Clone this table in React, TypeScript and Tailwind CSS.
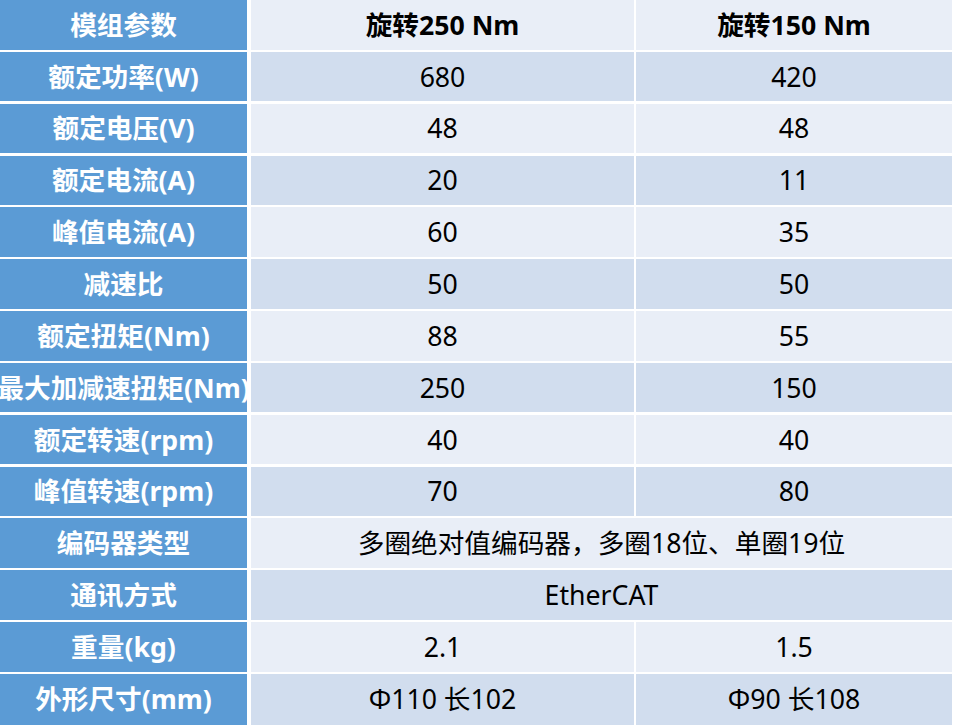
import React from "react";

type Row = { label: string; a: string; b?: string; merged?: boolean };

const rows: Row[] = [
  { label: "额定功率(W)", a: "680", b: "420" },
  { label: "额定电压(V)", a: "48", b: "48" },
  { label: "额定电流(A)", a: "20", b: "11" },
  { label: "峰值电流(A)", a: "60", b: "35" },
  { label: "减速比", a: "50", b: "50" },
  { label: "额定扭矩(Nm)", a: "88", b: "55" },
  { label: "最大加减速扭矩(Nm)", a: "250", b: "150" },
  { label: "额定转速(rpm)", a: "40", b: "40" },
  { label: "峰值转速(rpm)", a: "70", b: "80" },
  { label: "编码器类型", a: "多圈绝对值编码器，多圈18位、单圈19位", merged: true },
  { label: "通讯方式", a: "EtherCAT", merged: true },
  { label: "重量(kg)", a: "2.1", b: "1.5" },
  { label: "外形尺寸(mm)", a: "Φ110 长102", b: "Φ90 长108" },
];

const font = { fontFamily: '"Noto Sans", "Noto Sans CJK SC", sans-serif' };

export default function App() {
  return (
    <div className="w-[955px] h-[725px] bg-white overflow-hidden" style={font}>
      <div className="flex flex-col gap-[2.35px] w-[952px] h-[725px]">
        <div className="flex h-[49.5px] shrink-0">
          <div className="w-[247px] shrink-0 bg-[#5b9bd5] flex items-center justify-center text-white font-bold text-[26.67px] whitespace-nowrap overflow-hidden">
            模组参数
          </div>
          <div className="w-[383px] ml-[4px] shrink-0 bg-[#e9eef7] flex items-center justify-center text-black font-bold text-[26.67px] whitespace-nowrap">
            旋转250 Nm
          </div>
          <div className="w-[316px] ml-[2px] shrink-0 bg-[#e9eef7] flex items-center justify-center text-black font-bold text-[26.67px] whitespace-nowrap">
            旋转150 Nm
          </div>
        </div>
        {rows.map((r, i) => {
          const bg = i % 2 === 0 ? "bg-[#d1ddee]" : "bg-[#e9eef7]";
          const last = i === rows.length - 1;
          return (
            <div key={i} className={last ? "flex flex-1 min-h-0" : "flex h-[49.5px] shrink-0"}>
              <div className="w-[247px] shrink-0 bg-[#5b9bd5] flex items-center justify-center text-white font-bold text-[26.67px] whitespace-nowrap overflow-hidden">
                {r.label}
              </div>
              {r.merged ? (
                <div className={`w-[701px] ml-[4px] shrink-0 ${bg} flex items-center justify-center text-black text-[26.67px] whitespace-nowrap`}>
                  {r.a}
                </div>
              ) : (
                <>
                  <div className={`w-[383px] ml-[4px] shrink-0 ${bg} flex items-center justify-center text-black text-[26.67px] whitespace-nowrap`}>
                    {r.a}
                  </div>
                  <div className={`w-[316px] ml-[2px] shrink-0 ${bg} flex items-center justify-center text-black text-[26.67px] whitespace-nowrap`}>
                    {r.b}
                  </div>
                </>
              )}
            </div>
          );
        })}
      </div>
    </div>
  );
}
